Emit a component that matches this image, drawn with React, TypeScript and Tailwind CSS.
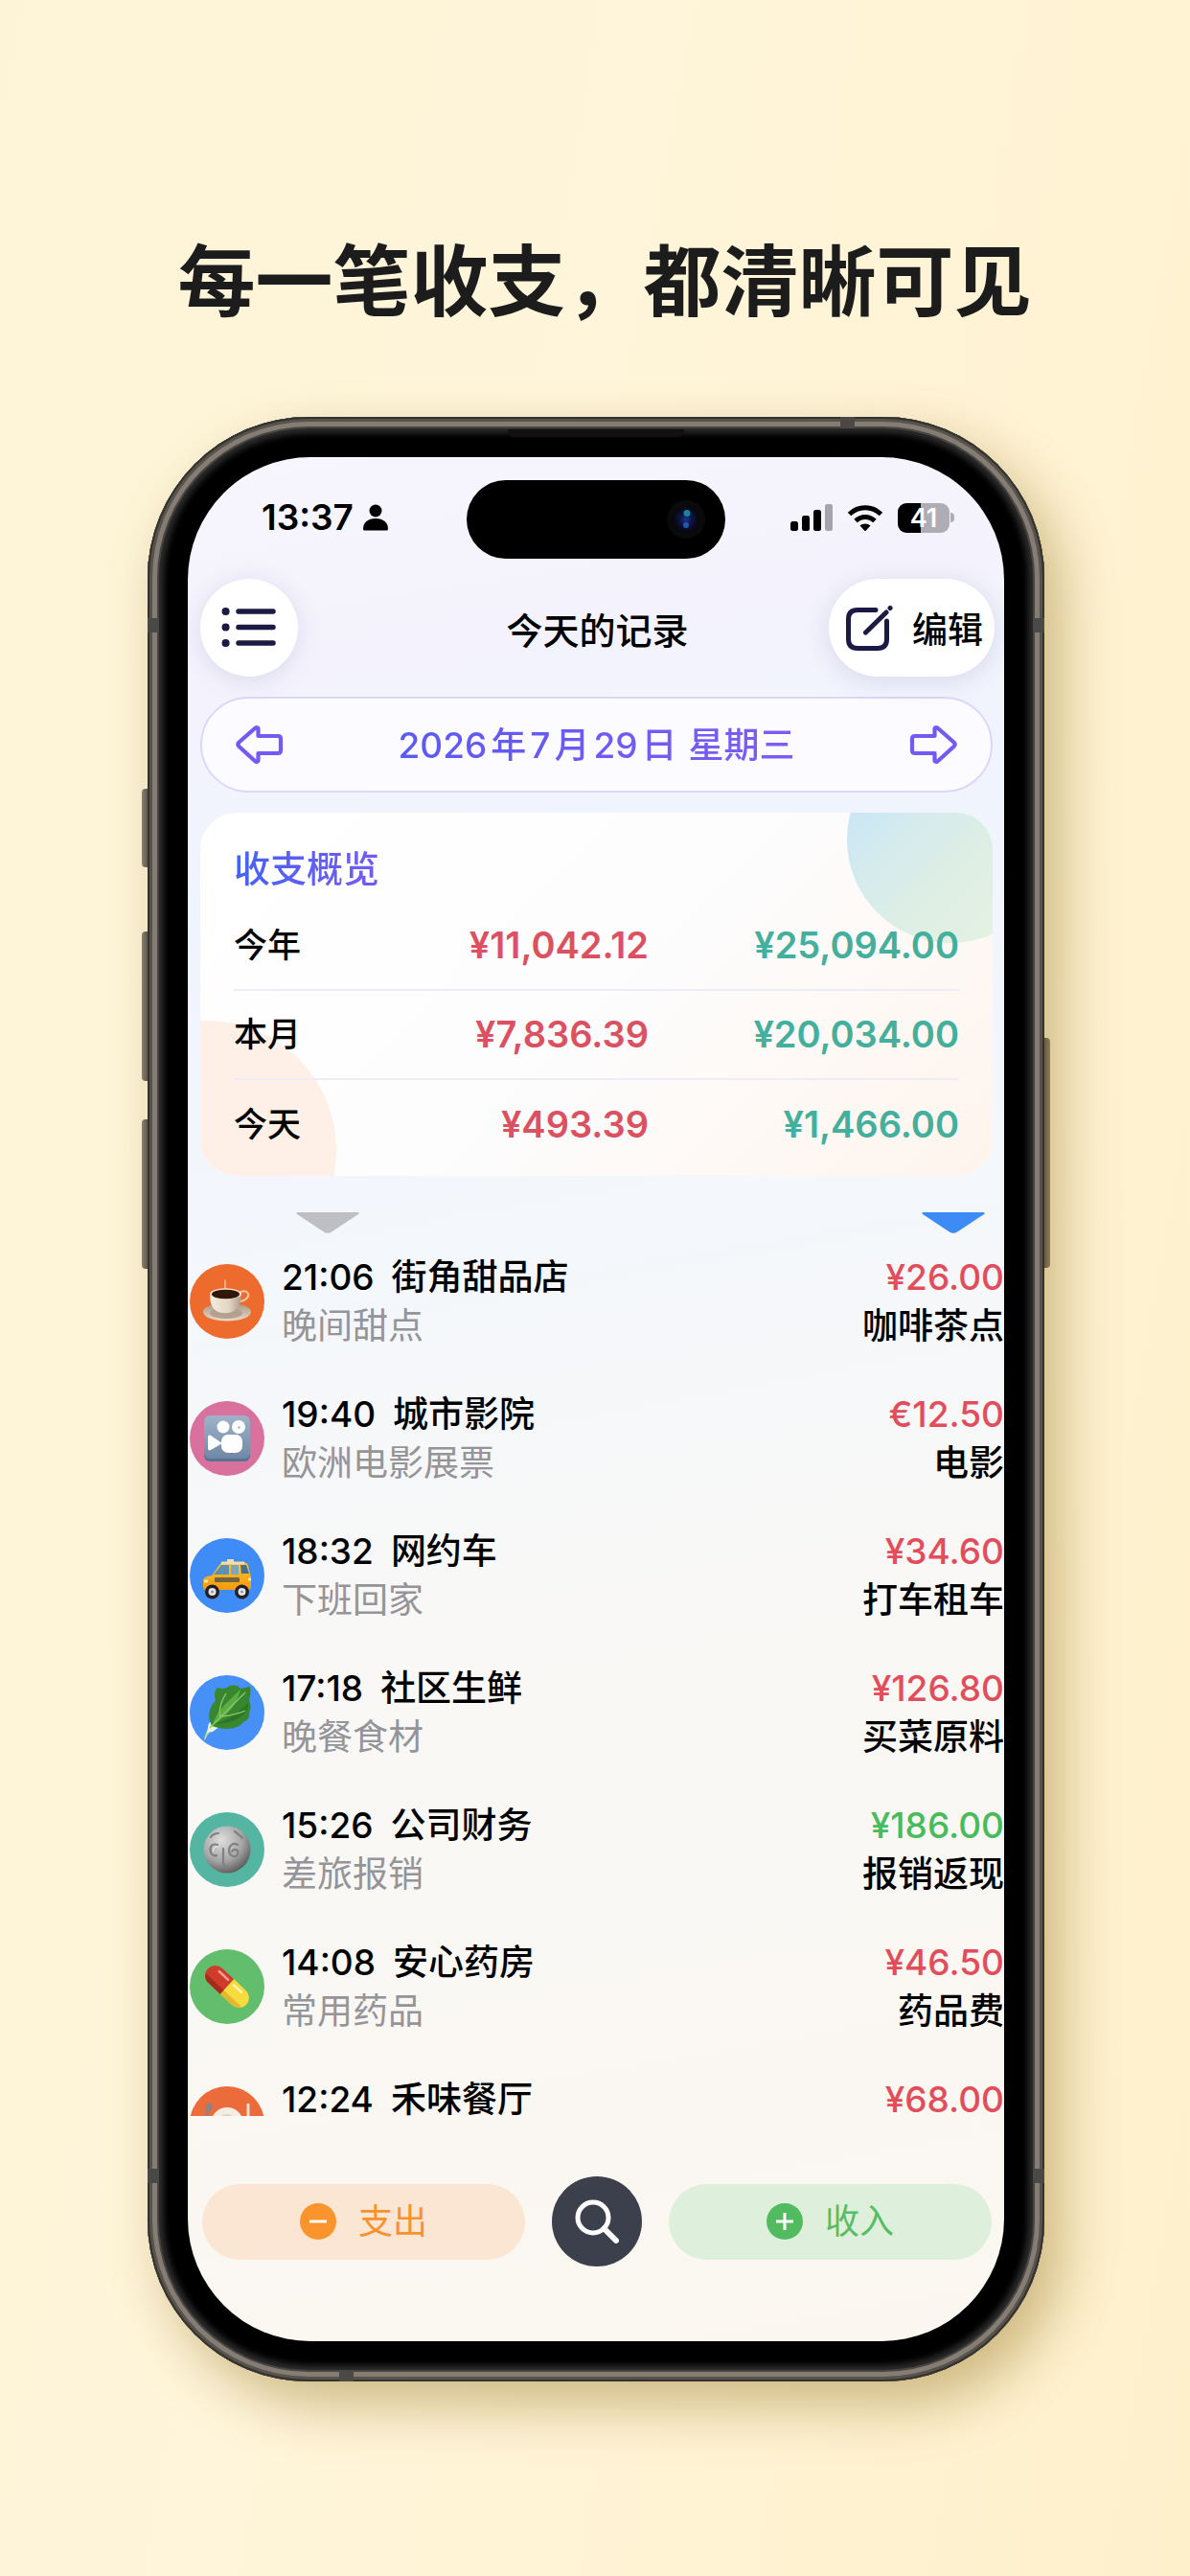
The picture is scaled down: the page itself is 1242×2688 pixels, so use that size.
import type { ReactNode } from 'react';

type Entry = {
  time: string;
  place: string;
  note?: string;
  amount: string;
  category?: string;
  income?: boolean;
  color: string;
  icon: ReactNode;
};

const summary = [
  { label: '今年', expense: '¥11,042.12', income: '¥25,094.00' },
  { label: '本月', expense: '¥7,836.39', income: '¥20,034.00' },
  { label: '今天', expense: '¥493.39', income: '¥1,466.00' },
];

const entries: Entry[] = [
  { time: '21:06', place: '街角甜品店', note: '晚间甜点', amount: '¥26.00', category: '咖啡茶点', color: 'bg-[#ec6b2d]', icon: <CoffeeIcon /> },
  { time: '19:40', place: '城市影院', note: '欧洲电影展票', amount: '€12.50', category: '电影', color: 'bg-[#d9719f]', icon: <CinemaIcon /> },
  { time: '18:32', place: '网约车', note: '下班回家', amount: '¥34.60', category: '打车租车', color: 'bg-[#3f8cf7]', icon: <TaxiIcon /> },
  { time: '17:18', place: '社区生鲜', note: '晚餐食材', amount: '¥126.80', category: '买菜原料', color: 'bg-[#4690f8]', icon: <LeafIcon /> },
  { time: '15:26', place: '公司财务', note: '差旅报销', amount: '¥186.00', category: '报销返现', income: true, color: 'bg-[#55b5a3]', icon: <CoinIcon /> },
  { time: '14:08', place: '安心药房', note: '常用药品', amount: '¥46.50', category: '药品费', color: 'bg-[#62bd6c]', icon: <PillIcon /> },
  { time: '12:24', place: '禾味餐厅', amount: '¥68.00', color: 'bg-[#ec6b3a]', icon: <MealIcon /> },
];

function CoffeeIcon() {
  return (
    <svg viewBox="0 0 50 50" className="size-[50px]">
      <defs>
        <linearGradient id="cup" x1="0" x2="1">
          <stop offset="0" stopColor="#f5ece0" />
          <stop offset="0.6" stopColor="#e3d5c5" />
          <stop offset="1" stopColor="#b09c8a" />
        </linearGradient>
        <linearGradient id="saucer" x1="0" x2="0" y1="0" y2="1">
          <stop offset="0" stopColor="#a89685" />
          <stop offset="1" stopColor="#ead9c6" />
        </linearGradient>
      </defs>
      <path d="M23 3v8" stroke="#f7bb93" strokeWidth="1.5" strokeLinecap="round" />
      <ellipse cx="25" cy="36" rx="25" ry="9.5" fill="url(#saucer)" />
      <ellipse cx="24" cy="37" rx="17" ry="6" fill="#b3a08e" />
      <path d="M39 15c8-3 11 4 5 8-2 1.500-4 2-6 2" fill="none" stroke="#f1c7a2" strokeWidth="2" />
      <path d="M7 17c0 9 2 15 7 18 5 3 13 3 18 0 5-3 8-9 8-18z" fill="url(#cup)" />
      <ellipse cx="23.500" cy="17" rx="16.500" ry="5.800" fill="#f3e4d3" />
      <ellipse cx="23.500" cy="17.500" rx="14.500" ry="4.800" fill="#321708" />
    </svg>
  );
}

function CinemaIcon() {
  return (
    <svg viewBox="0 0 50 50" className="size-[50px]">
      <defs>
        <linearGradient id="cinema" x1="0" x2="0" y1="0" y2="1">
          <stop offset="0" stopColor="#9fb2c8" />
          <stop offset="1" stopColor="#7088a6" />
        </linearGradient>
      </defs>
      <rect x="1" y="2" width="48" height="47" rx="6" fill="#5a7391" />
      <rect x="1" y="1" width="48" height="45" rx="6" fill="url(#cinema)" />
      <circle cx="21" cy="13" r="6.500" fill="#fff" />
      <circle cx="37" cy="13" r="7" fill="#fff" />
      <circle cx="37.500" cy="13.500" r="1.500" fill="#b8c6d6" />
      <rect x="19" y="21" width="22" height="19" rx="7" fill="#fff" />
      <path d="M20 30 8 22c-2-1-3 0-3 2v11c0 2 1 3 3 2z" fill="#fff" />
    </svg>
  );
}

function TaxiIcon() {
  return (
    <svg viewBox="0 0 50 50" className="size-[50px]">
      <defs>
        <linearGradient id="taxi" x1="0" x2="0" y1="0" y2="1">
          <stop offset="0" stopColor="#fdc62e" />
          <stop offset="1" stopColor="#f49a10" />
        </linearGradient>
      </defs>
      <path d="M25 8h7v5h-7z" fill="#f3dcae" />
      <path d="M9 25 17 14c1-2 3-3 5-3h18c4 0 6 1 7 4l3 12v9c0 3-1 4-3 4H4c-3 0-4-1-4-4v-5c0-3 2-5 9-6z" fill="url(#taxi)" />
      <path d="m11 24 8-10h8v10z" fill="#5c90b5" />
      <path d="M29 14h8v10h-8z" fill="#7ea6bd" />
      <path d="M39 14h6l3 9h-8z" fill="#476f8d" />
      <path d="M19 12h24" stroke="#f7dda0" strokeWidth="3" />
      <rect x="12" y="27" width="26" height="5" rx="1" fill="#71653f" />
      <path d="M1 31h4M47 29h3" stroke="#fff0b4" strokeWidth="2.500" />
      <circle cx="9.500" cy="42" r="7.500" fill="#241f1e" />
      <circle cx="40.500" cy="42" r="7.500" fill="#241f1e" />
      <circle cx="9.500" cy="42" r="4" fill="#dfe5ea" />
      <circle cx="40.500" cy="42" r="4" fill="#dfe5ea" />
      <circle cx="9.500" cy="42" r="1.300" fill="#7f8a93" />
      <circle cx="40.500" cy="42" r="1.300" fill="#7f8a93" />
    </svg>
  );
}

function LeafIcon() {
  return (
    <svg viewBox="0 0 50 60" className="h-[60px] w-[50px]">
      <path d="M1 58c2-9 5-13 12-18l3 4C9 48 5 51 2 59z" fill="#b9dfa0" />
      <path d="M5 46c0-5 3-8 7-8l6 6-8 6-6 1z" fill="#e8f7dc" />
      <path d="M9 44C4 34 6 25 13 17c-2-6-1-10 2-13 5 2 9 1 13-2 4-1 8-1 11 3 4 0 7-2 10-2 1 6 0 10-1 14 2 5 2 9 0 13 1 5-1 8-6 10-8 9-20 8-33 4z" fill="#38872f" />
      <path d="M10 43c3-13 12-21 29-37-4 15-12 26-29 37z" fill="#5aac43" />
      <path d="M12 42c8-2 22-8 35-22 1 12-14 22-35 22z" fill="#2c7527" />
      <path d="M7 46 44 9M18 35c-2-7 1-17 6-25M20 34c8-1 17-3 24-6" stroke="#8cc96d" strokeWidth="1.300" fill="none" />
    </svg>
  );
}

function CoinIcon() {
  return (
    <svg viewBox="0 0 50 50" className="size-[50px]">
      <defs>
        <radialGradient id="coin" cx="0.38" cy="0.3" r="0.750">
          <stop offset="0" stopColor="#dedede" />
          <stop offset="0.600" stopColor="#a5a5a5" />
          <stop offset="1" stopColor="#575757" />
        </radialGradient>
      </defs>
      <circle cx="25" cy="25" r="24.500" fill="url(#coin)" />
      <path d="M15 20c-6-2-9 3-7 8 1 3 4 4 6 3M21 24v14c0 3 2 5 5 5M36 20c-5-3-9 1-9 6 0 6 7 8 9 4 2-5-4-7-6-3M8 12c2-3 5-4 8-4M33 6c3 3 6 4 8 7" fill="none" stroke="#808080" strokeWidth="2.200" strokeLinecap="round" />
      <path d="M16 22c-4-1-6 2-5 5" fill="none" stroke="#f2f2f2" strokeWidth="1" />
    </svg>
  );
}

function PillIcon() {
  return (
    <svg viewBox="0 0 50 50" className="size-[50px]">
      <g transform="rotate(43 25 25)">
        <path d="M25 14.500H8a10.500 10.500 0 0 0 0 21h17z" fill="#cf3d2a" />
        <path d="M25 14.500h17a10.500 10.500 0 0 1 0 21H25z" fill="#f7dc3f" />
        <path d="M25 30h25c-1 4-4 5.500-8 5.500H25z" fill="#e3b92c" />
        <path d="M25 30H0c1 4 4 5.500 8 5.500h17z" fill="#a82a1e" />
        <path d="M8 19h13" stroke="#f0a093" strokeWidth="2.500" strokeLinecap="round" />
        <path d="M29 19h11" stroke="#fff6b5" strokeWidth="2.500" strokeLinecap="round" />
      </g>
    </svg>
  );
}

function MealIcon() {
  return (
    <svg viewBox="0 0 50 50" className="size-[50px]">
      <circle cx="25" cy="25" r="17" fill="#f4ede2" />
      <circle cx="25" cy="26" r="11" fill="#ddd5c9" />
      <ellipse cx="6" cy="8" rx="3.500" ry="5" transform="rotate(25 6 8)" fill="#8c8480" />
      <path d="M4 13 2 46" stroke="#8c8480" strokeWidth="2.500" />
      <path d="M47 4v42" stroke="#e9dfd5" strokeWidth="3" />
    </svg>
  );
}

function ArrowIcon({ flip = false }: { flip?: boolean }) {
  return (
    <svg viewBox="0 0 50 42" className={flip ? 'h-[42px] w-[50px] -scale-x-100' : 'h-[42px] w-[50px]'}>
      <path
        d="M20 4 3.500 18.500c-1.500 1.500-1.500 3 0 4.500L20 38c1.500 1.500 3.500 1 3.500-1v-7H44q3 0 3-3V15q0-3-3-3H23.500V5c0-2-2-2.500-3.500-1z"
        fill="none"
        stroke="#7459f2"
        strokeWidth="4.200"
        strokeLinejoin="round"
      />
    </svg>
  );
}

function StatusBar() {
  return (
    <div className="grid h-[82px] grid-cols-[1fr_270px_1fr] items-center">
      <div className="flex items-center gap-[10px] pb-[4px] pl-[77px]">
        <span className="text-[37px] leading-[46px] font-semibold">13:37</span>
        <svg viewBox="0 0 26 28" className="h-[28px] w-[26px]">
          <circle cx="13" cy="7" r="6.500" />
          <path d="M0 26c0-7 5-11 13-11s13 4 13 11q0 1.500-1.500 1.500h-23Q0 27.500 0 26z" />
        </svg>
      </div>
      <div className="flex h-[82px] items-center justify-end rounded-full bg-black pr-[20px]">
        <svg viewBox="0 0 42 42" className="size-[42px]">
          <defs>
            <radialGradient id="lens">
              <stop offset="0" stopColor="#123a86" />
              <stop offset="0.450" stopColor="#0d1440" />
              <stop offset="1" stopColor="#060608" />
            </radialGradient>
          </defs>
          <circle cx="21" cy="21" r="20" fill="#0a0a0c" />
          <circle cx="21" cy="21" r="14" fill="url(#lens)" />
          <circle cx="22" cy="14.500" r="3.500" fill="#1d7fa6" />
          <circle cx="21" cy="27" r="3" fill="#2454b5" />
        </svg>
      </div>
      <div className="flex items-center justify-end gap-[15px] pr-[52px] pb-[4px]">
        <svg viewBox="0 0 44 28" className="h-[28px] w-[44px]">
          <rect x="0" y="18" width="8" height="10" rx="2.500" />
          <rect x="12" y="12" width="8" height="16" rx="2.500" />
          <rect x="24" y="6" width="8" height="22" rx="2.500" />
          <rect x="36" y="0" width="8" height="28" rx="2.500" fill="#a5a4ac" />
        </svg>
        <svg viewBox="0 0 38 28" className="h-[28px] w-[38px]" fill="none" stroke="#000" strokeWidth="5">
          <path d="M2.500 10.500c9.500-9 23.500-9 33 0" />
          <path d="M9 17.500c6-5.500 14-5.500 20 0" />
          <path d="M19 28.500 13.500 22.500c3-2.700 8-2.700 11 0z" fill="#000" stroke="none" />
        </svg>
        <div className="flex items-center gap-px">
          <div className="flex h-[31px] w-[54px] items-center justify-center rounded-[9px] bg-[linear-gradient(90deg,#000_44%,#aeadb5_44%)] text-[27px] leading-[31px] font-semibold text-white">
            41
          </div>
          <span className="h-[10px] w-[4px] rounded-r-full bg-[#aeadb5]" />
        </div>
      </div>
    </div>
  );
}

function Header() {
  return (
    <header className="mt-[21px] grid grid-cols-[1fr_auto_1fr] items-center pr-[10px] pl-[13px]">
      <button aria-label="菜单" className="flex size-[102px] items-center justify-center rounded-full bg-white shadow-[0_4px_28px_rgba(60,60,120,0.14)]">
        <svg viewBox="0 0 58 42" className="h-[42px] w-[58px]" stroke="#1b1a45" strokeWidth="5.500" strokeLinecap="round">
          <path d="M18 4h36M18 20.500h36M18 37h36" />
          <path d="M4.500 4h.1M4.500 20.500h.1M4.500 37h.1" strokeWidth="8" />
        </svg>
      </button>
      <h2 className="pt-[6px] text-[38px] leading-[52px] font-medium">今天的记录</h2>
      <button className="flex h-[102px] items-center gap-[20px] justify-self-end rounded-full bg-white pr-[12px] pl-[17px] text-[37px] font-medium shadow-[0_4px_28px_rgba(60,60,120,0.14)]">
        <svg viewBox="0 0 50 50" className="size-[50px]" fill="none" stroke="#1b1a45" strokeWidth="5" strokeLinecap="round">
          <path d="M32 6.500H13Q3.500 6.500 3.500 16v21q0 9.500 9.500 9.500h21q9.500 0 9.500-9.500V18" />
          <path d="M21.500 30 43 9M47 4.500l.1-.1" />
        </svg>
        <span className="pt-[6px]">编辑</span>
      </button>
    </header>
  );
}

function Overview() {
  return (
    <section className="relative mr-[12px] ml-[13px] mt-[21px] overflow-hidden rounded-[38px] bg-[linear-gradient(135deg,#ffffff_0%,#fdfdfe_50%,#fef4ec_100%)] px-[35px] pt-[30px] pb-[8px]">
      <div className="absolute -top-20 -right-16 size-[216px] rounded-full bg-[linear-gradient(135deg,#cbe7f5_20%,#ddeee6_55%,#e5f2df_90%)]" />
      <div className="absolute -bottom-[108px] -left-[128px] size-[270px] rounded-full bg-[#fef0e6]" />
      <h3 className="relative mb-[6px] w-fit bg-linear-to-r from-[#4263f5] to-[#735bf4] bg-clip-text text-[38px] leading-[56px] font-medium text-transparent">
        收支概览
      </h3>
      <table className="relative w-full table-fixed">
        <colgroup>
          <col className="w-[109px]" />
          <col />
          <col />
        </colgroup>
        <tbody>
          {summary.map((row) => (
            <tr key={row.label} className="h-[93px] border-b-2 border-[#eeedf7] last:border-0">
              <th scope="row" className="text-left text-[35px] font-medium">{row.label}</th>
              <td className="text-right text-[38px] font-semibold text-[#dc5162]">{row.expense}</td>
              <td className="text-right text-[38px] font-semibold text-[#43af9c]">{row.income}</td>
            </tr>
          ))}
        </tbody>
      </table>
    </section>
  );
}

function EntryRow({ entry }: { entry: Entry }) {
  return (
    <li className="flex items-start pb-[41px] pl-[2px] text-[37px] leading-[51px] last:pb-0">
      <div className={`overflow-hidden pt-[12px] ${entry.note ? '' : 'h-[43px]'}`}>
        <span className={`flex size-[78px] items-center justify-center rounded-full ${entry.color}`}>
          {entry.icon}
        </span>
      </div>
      <div className="ml-[18px] min-w-0 flex-1">
        <p className="flex gap-[18px] font-medium">
          <span>{entry.time}</span>
          {entry.place}
        </p>
        {entry.note && <p className="text-[#949499]">{entry.note}</p>}
      </div>
      <div className="text-right font-medium">
        <p className={entry.income ? 'text-[#48bb5c]' : 'text-[#e24d5c]'}>{entry.amount}</p>
        {entry.category && <p>{entry.category}</p>}
      </div>
    </li>
  );
}

function BottomBar() {
  return (
    <footer className="mt-[55px] grid grid-cols-[1fr_94px_1fr] items-center gap-[28px] pr-[13px] pb-[78px] pl-[15px] text-[36px]">
      <button className="flex h-[79px] items-center justify-center gap-[23px] rounded-full bg-[#fae6d2] text-[#f7922f]">
        <svg viewBox="0 0 38 38" className="size-[38px]">
          <circle cx="19" cy="19" r="19" fill="#fb942c" />
          <path d="M10 19h18" stroke="#fff" strokeWidth="3" />
        </svg>
        支出
      </button>
      <button aria-label="搜索" className="flex size-[94px] items-center justify-center rounded-full bg-[#3c3f4c]">
        <svg viewBox="0 0 46 46" className="size-[46px]" fill="none" stroke="#fff" strokeWidth="5">
          <circle cx="19" cy="19" r="16" />
          <path d="m30.500 30.500 12.500 12.500" strokeWidth="6" strokeLinecap="round" />
        </svg>
      </button>
      <button className="flex h-[79px] items-center justify-center gap-[23px] rounded-full bg-[#deefdb] text-[#57bd64]">
        <svg viewBox="0 0 38 38" className="size-[38px]">
          <circle cx="19" cy="19" r="19" fill="#53bb5f" />
          <path d="M10 19h18M19 10v18" stroke="#fff" strokeWidth="3" />
        </svg>
        收入
      </button>
    </footer>
  );
}

function PhoneFrame({ children }: { children: ReactNode }) {
  return (
    <div className="relative mt-[93px]">
      {/* side keys */}
      <span className="absolute top-[388px] -left-[6px] h-[82px] w-[12px] rounded-l-[4px] bg-linear-to-r from-[#8a857a] to-[#2f2d29]" />
      <span className="absolute top-[537px] -left-[6px] h-[156px] w-[12px] rounded-l-[4px] bg-linear-to-r from-[#8a857a] to-[#2f2d29]" />
      <span className="absolute top-[733px] -left-[6px] h-[156px] w-[12px] rounded-l-[4px] bg-linear-to-r from-[#8a857a] to-[#2f2d29]" />
      <span className="absolute top-[648px] -right-[6px] h-[240px] w-[12px] rounded-r-[4px] bg-linear-to-l from-[#8a857a] to-[#2f2d29]" />
      <div className="relative rounded-[168px] bg-black p-[42px] shadow-[18px_24px_56px_rgba(140,105,20,0.42),inset_0_0_0_2px_#34332f,inset_0_0_0_5px_#57524c,inset_0_0_0_10px_#857c73,inset_0_0_0_12px_#474541,inset_0_0_6px_17px_#2b2c2b]">
        {/* antenna bands */}
        <span className="absolute top-[210px] left-0 h-[15px] w-[12px] bg-[#4b4945]" />
        <span className="absolute top-[210px] right-0 h-[15px] w-[12px] bg-[#4b4945]" />
        <span className="absolute bottom-[207px] left-0 h-[15px] w-[12px] bg-[#4b4945]" />
        <span className="absolute right-0 bottom-[207px] h-[15px] w-[12px] bg-[#4b4945]" />
        <span className="absolute top-0 right-[198px] h-[12px] w-[15px] bg-[#4b4945]" />
        <span className="absolute bottom-0 left-[200px] h-[12px] w-[15px] bg-[#4b4945]" />
        <span className="absolute top-[13px] left-1/2 h-[8px] w-[184px] -translate-x-1/2 rounded-b-[6px] bg-[#12110f]" />
        <div className="overflow-hidden rounded-[128px] bg-[linear-gradient(170deg,#f7f5fe_0%,#f4f3fd_12%,#f0f4fe_22%,#f4f7fb_42%,#f9f8f6_62%,#fbf7f0_100%)] pt-[24px] text-black">
          {children}
        </div>
      </div>
    </div>
  );
}

export default function App() {
  return (
    <main className="min-h-screen bg-[linear-gradient(100deg,#fdf4d8_0%,#fff5da_40%,#fef0cb_100%)] pt-[246px] pr-[152px] pb-[200px] pl-[154px] font-[Inter,'Noto_Sans_CJK_SC',sans-serif]">
      <h1 className="pl-[18px] text-center text-[81px] leading-[96px] font-bold whitespace-nowrap text-[#1c1c1c]">
        每一笔收支，都清晰可见
      </h1>
      <PhoneFrame>
        <StatusBar />
        <Header />
        <nav className="mt-[21px] mr-[12px] ml-[13px] flex h-[100px] items-center justify-between rounded-full border-2 border-[#ddd6fb] bg-[#fcfbff] px-[35px]">
          <button aria-label="前一天"><ArrowIcon /></button>
          <p className="flex gap-[4px] bg-linear-to-r from-[#5a5af3] to-[#7e5cf5] bg-clip-text pt-[2px] text-[37px] leading-[52px] font-medium text-transparent">
            <span>2026</span><span>年</span><span>7</span><span>月</span><span>29</span><span>日</span>
            <span className="ml-[8px]">星期三</span>
          </p>
          <button aria-label="后一天"><ArrowIcon flip /></button>
        </nav>
        <Overview />
        <div className="mt-[38px] flex justify-between pr-[20px] pl-[113px]">
          <svg viewBox="0 0 66 22" className="h-[22px] w-[66px]">
            <path d="M2 0h62q3 0 1 2L37 20.500q-4 2.500-8 0L1 2Q-1 0 2 0z" fill="#bebfc3" />
          </svg>
          <svg viewBox="0 0 66 22" className="h-[22px] w-[66px]">
            <path d="M2 0h62q3 0 1 2L37 20.500q-4 2.500-8 0L1 2Q-1 0 2 0z" fill="#3d8bf6" />
          </svg>
        </div>
        <ul className="mt-[20px]">
          {entries.map((entry) => (
            <EntryRow key={entry.time} entry={entry} />
          ))}
        </ul>
        <BottomBar />
      </PhoneFrame>
    </main>
  );
}
